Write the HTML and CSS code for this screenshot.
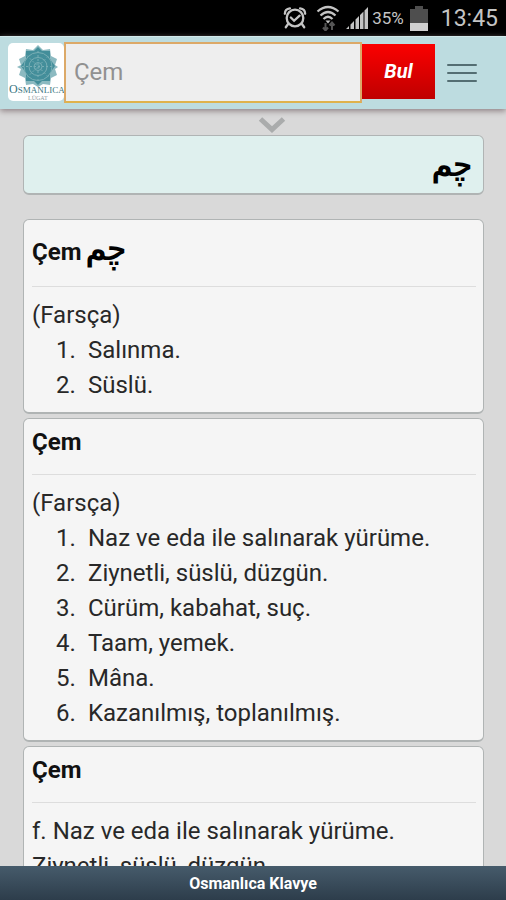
FILE: index.html
```html
<!DOCTYPE html>
<html lang="tr">
<head>
<meta charset="utf-8">
<meta name="viewport" content="width=device-width, initial-scale=1">
<title>Osmanlıca Lügat</title>
<link rel="stylesheet" href="styles.css">
</head>
<body>
<div class="status">
  <svg class="alarm" width="24" height="26" viewBox="0 0 26 26" fill="none" stroke="#c4c4c4" stroke-width="2.500" stroke-linecap="round">
    <circle cx="13" cy="13" r="9"/><path d="M8.500 12.500l3.500 3.500 6-5.500M5.500 19.500L3 23M20.500 19.500L23 23M2 8.500Q2 3 7.500 2.500M24 8.500Q24 3 18.500 2.500"/>
  </svg>
  <svg class="wifi" width="24" height="26" viewBox="0 0 24 26" fill="none" stroke="#c4c4c4" stroke-width="2.200">
    <path d="M1.500 6.500Q12-2.500 22.500 6.500M4.500 10.500Q12 3.500 19.500 10.500M7.500 14Q12 9.500 16.500 14"/><path d="M9.500 15.500h5L12 18.500z" fill="#c4c4c4" stroke="none"/>
    <path d="M9.500 18v7M7 22.500l2.500 3 2.500-3M16 25v-7M13.500 20.500l2.500-3 2.500 3" stroke="#555" stroke-width="2"/>
  </svg>
  <svg class="signal" width="24" height="24" viewBox="0 0 24 24" fill="#c4c4c4">
    <path d="M1 23l3-3v3zM5.500 18.500l3.500-3.500v8H5.500zM10.500 13.500L14 10v13h-3.500zM15 9l3.500-3.500V23H15zM19.500 4.500L23 1v22h-3.500z"/>
  </svg>
  <span class="percent">35%</span>
  <svg class="battery" width="18" height="27" viewBox="0 0 18 27">
    <path d="M5 1h8v3h5v14H0V4h5z" fill="#4e4e4e"/><path d="M0 18h18v8H0z" fill="#d0d0d0"/>
  </svg>
  <time class="clock">13:45</time>
</div>
<header class="bar">
  <a class="logo" href="#" aria-label="Osmanlıca Lügat">
    <svg width="56" height="58" viewBox="0 0 56 58">
      <g fill="#438e9a"><path d="M30 2l5 5 7-1 1 7 6 3-2 6 3 2-3 2 2 6-6 3-1 7-7-1-5 3-5-3-7 1-1-7-6-3 2-6-4-2 4-2-2-6 6-3 1-7 7 1z" fill="#8cbac1"/>
      <path d="M30 4l4 4h8v8l5 7-5 7v8h-8l-4 4-4-4h-8v-8l-5-7 5-7V8h8z"/></g>
      <g fill="none" stroke="#78aeb5"><circle cx="30" cy="23.500" r="14"/><circle cx="30" cy="23.500" r="9"/><circle cx="30" cy="23.500" r="4"/>
      <path d="M30 8v31M14 23.500h32M19 12.500l22 22M19 34.500l22-22" stroke-dasharray="2 2"/></g>
      <text class="logo-name" x="1" y="50"><tspan class="logo-cap">O</tspan>SMANLICA</text>
      <text class="logo-sub" x="20" y="57">LÜGAT</text>
    </svg>
  </a>
  <form class="search">
    <input class="query" type="text" placeholder="Çem" aria-label="Kelime">
    <button class="find" type="button">Bul</button>
  </form>
  <button class="menu" type="button" aria-label="Menü"><span></span><span></span><span></span></button>
</header>
<main class="content">
  <svg class="chevron" width="28" height="17" viewBox="0 0 28 17" fill="none" stroke="#aaacac" stroke-width="5"><path d="M2.500 2L14 12.500 25.500 2"/></svg>
  <div class="script-box"><span class="arabic" lang="fa" dir="rtl">چم</span></div>
  <article class="card">
    <h2>Çem <span class="arabic" lang="fa" dir="rtl">چم</span></h2>
    <p>(Farsça)</p>
    <ol><li>Salınma.</li><li>Süslü.</li></ol>
  </article>
  <article class="card">
    <h2>Çem</h2>
    <p>(Farsça)</p>
    <ol>
      <li>Naz ve eda ile salınarak yürüme.</li>
      <li>Ziynetli, süslü, düzgün.</li>
      <li>Cürüm, kabahat, suç.</li>
      <li>Taam, yemek.</li>
      <li>Mâna.</li>
      <li>Kazanılmış, toplanılmış.</li>
    </ol>
  </article>
  <article class="card">
    <h2>Çem</h2>
    <p>f. Naz ve eda ile salınarak yürüme.<br>Ziynetli, süslü, düzgün.</p>
  </article>
</main>
<footer class="keyboard"><a href="#">Osmanlıca Klavye</a></footer>
</body>
</html>
```
FILE: styles.css
```css
* { box-sizing: border-box; }
body {
  margin: 0;
  height: 100vh;
  display: flex;
  flex-direction: column;
  overflow: hidden;
  background: #d9d9d9;
  color: #282828;
  font-family: Roboto, "Liberation Sans", sans-serif;
  font-size: 24px;
  line-height: 35px;
}
svg { display: block; flex: none; }
.status {
  flex: none;
  height: 36px;
  padding-right: 8px;
  display: flex;
  align-items: center;
  justify-content: flex-end;
  background: #000;
  color: #c4c4c4;
}
.alarm { margin-right: 9px; }
.wifi { margin-right: 5px; }
.percent { margin: 0 6px 0 3px; font-size: 17px; }
.battery { margin-right: 13px; }
.clock { font-size: 23px; }
.bar {
  flex: none;
  position: relative;
  display: flex;
  align-items: center;
  height: 73px;
  padding: 0 26px 2px 8px;
  background: #bddce0;
  border-top: 1px solid #d3eaec;
  box-shadow: 0 2px 6px #8d7f83;
}
.logo { flex: none; width: 56px; height: 58px; background: #fff; border-radius: 5px; }
.logo-name { font: 9px "Liberation Serif", serif; fill: #397580; }
.logo-cap { font-size: 12px; }
.logo-sub { font: 6px "Liberation Serif", serif; fill: #8b9c9f; }
.search { flex: 1; min-width: 0; display: flex; align-items: center; }
.query {
  flex: 1;
  min-width: 0;
  height: 61px;
  padding: 0 8px;
  border: 2px solid #dca968;
  border-bottom-color: #dfb24c;
  background: #eee;
  font: 24px Roboto, sans-serif;
}
.query::placeholder { color: #919191; opacity: 1; }
.find {
  width: 73px;
  height: 55px;
  border: 0;
  padding: 0;
  margin-bottom: 2px;
  background: linear-gradient(#fb0000, #bf0000);
  color: #fff;
  font: italic bold 20px Roboto, sans-serif;
}
.menu {
  width: 36px;
  margin-left: 9px;
  padding: 2px 3px 0;
  border: 0;
  background: none;
  display: grid;
  gap: 6px;
}
.menu span { height: 2px; border-radius: 1px; background: #546e73; }
.content { flex: 1; min-height: 0; overflow: hidden; padding: 8px 22px 0 23px; }
.chevron { margin: 0 auto 1px 235px; }
.script-box, .card { border: 1px solid #b0b4b4; border-bottom-width: 2px; border-radius: 6px; }
.script-box {
  display: flex;
  align-items: center;
  justify-content: flex-end;
  height: 60px;
  margin-bottom: 24px;
  padding: 0 11px;
  background: #dff0ee;
}
.arabic { color: #000; font: bold 32px/46px "DejaVu Sans Mono", "DejaVu Sans", monospace; }
.card { margin-bottom: 4px; padding: 6px 7px 9px 8px; background: #f5f5f5; }
.card h2 { margin: 0 0 11px; padding-bottom: 14px; border-bottom: 1px solid #ddd; font-size: 24px; color: #111; }
.card p { margin: 0; }
.card ol { margin: 0; padding: 0; list-style: none; counter-reset: item; }
.card li { counter-increment: item; display: flex; padding-left: 24px; }
.card li::before { content: counter(item) "."; flex: none; width: 32px; }
.keyboard {
  flex: none;
  height: 34px;
  background: linear-gradient(#465b6b, #2d3d4b);
  text-align: center;
  line-height: 30px;
}
.keyboard a { color: #fff; font-size: 16px; font-weight: bold; text-decoration: none; }
```
